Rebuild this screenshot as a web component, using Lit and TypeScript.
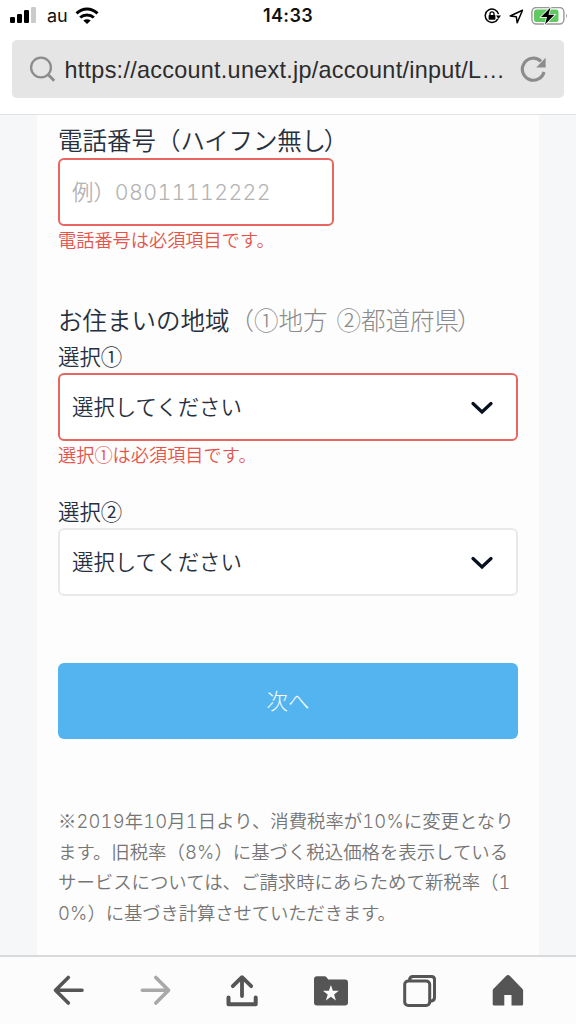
import { LitElement, html, css, svg } from "lit";
import { customElement, property } from "lit/decorators.js";

const icons = {
  back: svg`<path d="M20.300 7.500 7.500 20.300l12.800 12.800M8 20.300h26" fill="none" stroke="currentColor" stroke-width="3.600" stroke-linecap="round" stroke-linejoin="round"/>`,
  forward: svg`<path d="m19.800 7.500 12.800 12.800-12.800 12.800M32 20.300H6.300" fill="none" stroke="currentColor" stroke-width="3.600" stroke-linecap="round" stroke-linejoin="round"/>`,
  share: svg`<path d="M18 26V8M8.800 16.200 18 7.200l9.200 9" fill="none" stroke="currentColor" stroke-width="3.800" stroke-linecap="round" stroke-linejoin="round"/><path d="M4.500 27.500v6.800h27.200v-6.800" fill="none" stroke="currentColor" stroke-width="4" stroke-linecap="round" stroke-linejoin="round"/>`,
  bookmarks: svg`<path d="M5 6.300h7.600q1 0 1.700.8l2 2.500H33a3 3 0 0 1 3 3V32.600a3 3 0 0 1-3 3H5a3 3 0 0 1-3-3V9.300a3 3 0 0 1 3-3Z" fill="currentColor"/><path d="m18.900 15 2 5.800h5.900l-4.700 3.600 1.800 6-5-3.600-5 3.600 1.800-6-4.700-3.600h5.900Z" fill="#fcfcfc"/>`,
  tabs: svg`<g fill="none" stroke="currentColor" stroke-width="3"><rect x="4.700" y="11" width="25" height="24.500" rx="3.500"/><path d="M9.500 10.500q0-4 3.500-4h18.500q3 0 3 3v18q0 3.500-4 3.700"/></g>`,
  home: svg`<path d="M18 6q2-2 4 0l12.500 13q.600.600.6 1.500V34.200q0 1.300-1.300 1.300H23.500V25h-7.200v10.500H6q-1.300 0-1.300-1.300V20.500q0-.9.600-1.500Z" fill="currentColor"/>`,
};

@customElement("status-bar")
class StatusBar extends LitElement {
  static styles = css`
    :host { display: grid; grid-template-columns: 1fr auto 1fr; align-items: center; height: 32px; padding: 0 8px 0 9px; color: #111; }
    .side { display: flex; align-items: center; }
    .right { justify-content: flex-end; }
    .carrier { font: 400 18px/24px Inter, sans-serif; margin: 0 7px 0 11px; }
    .time { font: 600 18px/24px Inter, sans-serif; letter-spacing: 0.35px; margin-right: 1px; }
    svg { display: block; flex: none; }
    .lock { margin-right: 8px; }
    .arrow { margin-right: 7px; }
  `;
  render() {
    return html`
      <div class="side">
        <svg width="27" height="18" viewBox="0 0 27 18">
          <rect x="1" y="10" width="5" height="6" rx="1.300"/>
          <rect x="8" y="7" width="5" height="9" rx="1.300"/>
          <rect x="15" y="3" width="5" height="13" rx="1.300"/>
          <rect x="22" y="0" width="5" height="16" rx="1.300" fill="#cbcbcb"/>
        </svg>
        <span class="carrier">au</span>
        <svg width="24" height="18" viewBox="0 0 24 18">
          <g fill="none" stroke="#000" stroke-width="3">
            <path d="M1.500 6.300Q6.300 2 12 2t10.500 4.300"/>
            <path d="M5.200 10.500Q8 8 12 8T18.800 10.500"/>
          </g>
          <path d="M8.300 13.500Q12 10.800 15.700 13.500L12 17Z"/>
        </svg>
      </div>
      <div class="time">14:33</div>
      <div class="side right">
        <svg class="lock" width="17" height="16" viewBox="0 0 17 16">
          <path d="M13.900 10.800A6.700 6.700 0 1 1 14.500 6.200" fill="none" stroke="#000" stroke-width="1.500"/>
          <path d="M12 7.500h5l-2.500 3.400Z"/>
          <rect x="4.600" y="7" width="6.800" height="4.800" rx=".8"/>
          <path d="M6 7.500V5.800a2 2 0 0 1 4 0V7.500" fill="none" stroke="#000" stroke-width="1.300"/>
        </svg>
        <svg class="arrow" width="15" height="15" viewBox="0 0 15 15">
          <path d="M13.500 1.300 1.200 7l6.100.7.9 6.100Z" fill="none" stroke="#000" stroke-width="1.500" stroke-linejoin="round"/>
        </svg>
        <svg width="37" height="19" viewBox="0 0 37 19">
          <rect x=".9" y=".5" width="32" height="16.500" rx="4.500" fill="#fff" stroke="#999" stroke-width="1.400"/>
          <rect x="3" y="2.500" width="24.500" height="12.500" rx="2.500" fill="#61c962"/>
          <path d="M35 6q1.800 2.700 0 5.500Z" fill="#999"/>
          <path d="M19.500.5 10 10h6l-2 7.500 9.500-9.700h-6Z" fill="#000" stroke="#fff" stroke-width="1.500" paint-order="stroke"/>
        </svg>
      </div>`;
  }
}

@customElement("address-bar")
class AddressBar extends LitElement {
  static styles = css`
    :host { display: flex; align-items: center; height: 58px; margin: 8px 12px 0; box-sizing: border-box; padding: 0 17px 0 17px; border-radius: 5px; background: #e5e5e5; color: #8c8c8c; }
    .url { flex: 1; margin: 1px 0 0 8.500px; font: 400 23.400px/30px "Liberation Sans", Arial, sans-serif; letter-spacing: 0.280px; color: #2c2c2c; white-space: nowrap; }
    svg { display: block; flex: none; }
  `;
  render() {
    return html`
      <svg width="27" height="28" viewBox="0 0 27 28" fill="none" stroke="currentColor"><circle cx="12" cy="12.500" r="9.900" stroke-width="2.300"/><path d="m18.800 19.300 6.400 6.400" stroke-width="3"/></svg>
      <span class="url">https://account.unext.jp/account/input/L…</span>
      <svg width="27" height="28" viewBox="0 0 27 28"><path d="M24 17A11 11 0 1 1 21 6.300" fill="none" stroke="currentColor" stroke-width="3.200"/><path d="M25.600 2.800v9.600H16.200Z" fill="currentColor"/></svg>`;
  }
}

@customElement("select-box")
class SelectBox extends LitElement {
  @property({ type: Boolean, reflect: true }) invalid = false;
  static styles = css`
    :host { display: flex; align-items: center; justify-content: space-between; box-sizing: border-box; height: 68px; padding: 0 23px 0 12px; border: 2px solid #e8eaea; border-radius: 6px; background: #fff; font-size: 21.400px; }
    :host([invalid]) { border-color: #e9655f; }
    span { margin-top: -4px; }
    svg { display: block; margin-top: 2px; }
  `;
  render() {
    return html`<span>選択してください</span>
      <svg width="22" height="14" viewBox="0 0 22 14"><path d="m2 2.500 9 8.500 9-8.500" fill="none" stroke="#06101f" stroke-width="3.200" stroke-linecap="round"/></svg>`;
  }
}

@customElement("tool-bar")
class ToolBar extends LitElement {
  static styles = css`
    :host { display: flex; justify-content: space-between; box-sizing: border-box; height: 69px; padding: 13px 48px 0; border-top: 2px solid #d8d9da; background: #fcfcfc; color: #555; }
    .off { color: #a8a8a8; }
    svg { display: block; }
  `;
  render() {
    return html`${Object.entries(icons).map(
      ([name, art]) => html`<svg class=${name === "forward" ? "off" : "on"} width="40" height="40" viewBox="0 0 40 40">${art}</svg>`
    )}`;
  }
}

@customElement("app-root")
class AppRoot extends LitElement {
  static styles = css`
    :host { display: flex; flex-direction: column; height: 1024px; overflow: hidden; background: #fff; color: #27303d; font-family: "Noto Sans CJK JP", sans-serif; font-weight: 350; }
    .page { flex: 1; min-height: 0; margin-top: 16px; border-top: 1px solid #e2e3e4; background: #f5f7f9; padding: 0 37px; }
    .sheet { height: 100%; box-sizing: border-box; background: #fdfdfd; padding: 6px 21px 0; }
    .label { font-size: 24.500px; line-height: 37px; height: 37px; white-space: nowrap; }
    .hint { color: #8a8a8a; font-weight: 300; }
    .tight { letter-spacing: -0.300px; }
    .close { margin-left: -2px; }
    .space { display: inline-block; width: 9px; }
    .sub { font-size: 21.400px; line-height: 30px; height: 32px; }
    .phone { display: flex; align-items: center; box-sizing: border-box; width: 276px; height: 68px; padding: 0 0 4px 12px; border: 2px solid #e9655f; border-radius: 6px; background: #fff; font-size: 21.400px; color: #b3b3b3; }
    .phone .num { letter-spacing: 0.017em; }
    .error { font-size: 18.200px; line-height: 27px; height: 28px; color: #e4544c; }
    .error .close { margin-left: -1.500px; }
    .region { margin-top: 47px; }
    .first { margin-top: 3px; }
    .second { margin-top: 27px; }
    .button { display: block; width: 100%; height: 76px; margin-top: 67px; padding: 0 0 4px; border: 0; border-radius: 6px; background: #54b4ef; color: #fff; font: inherit; font-weight: 300; font-size: 21.400px; }
    .note { margin-top: 66px; font-size: 18.400px; line-height: 30.600px; color: #757575; }
    .line { display: block; height: 30.600px; white-space: nowrap; }
    .last { letter-spacing: -0.150px; }
    .num { font-family: Inter, sans-serif; font-weight: 300; font-feature-settings: "tnum"; line-height: 1; letter-spacing: 0.01em; }
  `;
  private n(t: string) {
    return html`<span class="num">${t}</span>`;
  }
  render() {
    const n = this.n;
    return html`
      <status-bar></status-bar>
      <address-bar></address-bar>
      <main class="page"><div class="sheet">
        <div class="label">電話番号（<span class="tight">ハイフン無し</span><span class="close">）</span></div>
        <div class="phone"><span>例）${n("08011112222")}</span></div>
        <div class="error">電話番号は必須項目です<span class="close">。</span></div>
        <div class="label region">お住まいの地域<span class="hint">（①地方<span class="space"></span>②都道府県<span class="close">）</span></span></div>
        <div class="sub first">選択①</div>
        <select-box invalid></select-box>
        <div class="error">選択①は必須項目です<span class="close">。</span></div>
        <div class="sub second">選択②</div>
        <select-box></select-box>
        <button class="button">次へ</button>
        <div class="note">
          <span class="line">※${n("2019")}年${n("10")}月${n("1")}日より、消費税率が${n("10%")}に変更となり</span>
          <span class="line">ます。旧税率（${n("8%")}）に基づく税込価格を表示している</span>
          <span class="line">サービスについては、ご請求時にあらためて新税率（${n("1")}</span>
          <span class="line last">${n("0%")}）に基づき計算させていただきます。</span>
        </div>
      </div></main>
      <tool-bar></tool-bar>`;
  }
}
